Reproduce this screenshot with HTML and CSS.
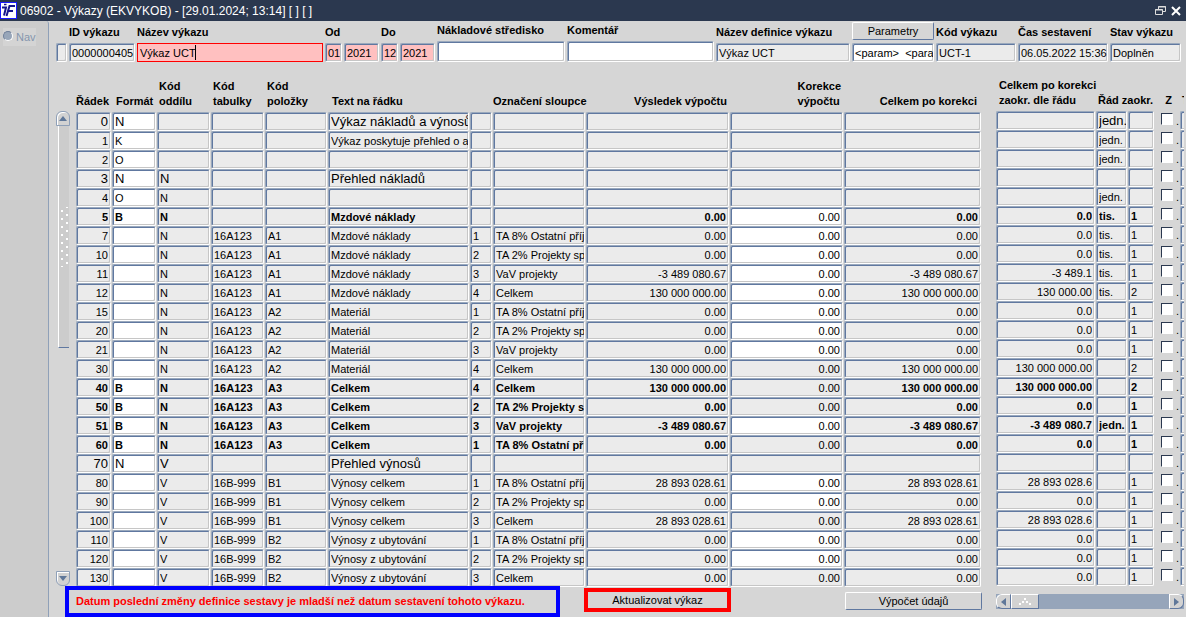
FILE: index.html
```
<!DOCTYPE html>
<html lang="cs">
<head>
    <meta charset="UTF-8">
    <meta name="viewport" content="width=device-width, initial-scale=1.0">
    <title>06902 - Výkazy (EKVYKOB)</title>
    <link rel="stylesheet" href="styles.css">
</head>
<body>
    <header class="titlebar">
        <svg class="logo" width="17" height="17" viewBox="0 0 17 17" aria-hidden="true">
            <rect x="0.5" y="0.5" width="16" height="16" fill="#fff" stroke="#1a1aff"/>
            <g fill="none" stroke="#14148c" stroke-width="2">
                <path d="M2 5.5h4L4 13.5"/>
                <path d="M15 4H9.5L6.5 14M8.5 9h4.500"/>
            </g>
            <path d="M4 2.500h2.500" stroke="#14148c" stroke-width="1.500"/>
        </svg>
        <h1>06902 - Výkazy (EKVYKOB) - [29.01.2024; 13:14] [ ] [ ]</h1>
        <button class="win-btn" aria-label="Obnovit">
            <svg width="11" height="10" viewBox="0 0 11 10" fill="none" stroke="#ddd">
                <path d="M3.500 3V0.500h7v5H8"/><path d="M3 1h8"/>
                <path d="M0.500 3.500h7v5h-7z"/><path d="M0 4h8"/>
            </svg>
        </button>
        <button class="win-btn" aria-label="Zavřít">
            <svg width="10" height="10" viewBox="0 0 10 10" stroke="#fff" stroke-width="2">
                <path d="M1 1l8 8M9 1L1 9"/>
            </svg>
        </button>
    </header>

    <div class="layout">
        <aside class="sidebar">
            <label class="nav"><input type="radio" name="nav" disabled>Nav</label>
        </aside>

        <main class="content">
            <form class="head-form">
                <div class="field w-mark"><input type="text" class="cell" aria-label="Značka" readonly></div>
                <div class="field w-id"><label for="idVykazu">ID výkazu</label><input type="text" id="idVykazu" class="cell" value="0000000405" readonly></div>
                <div class="field w-name"><label for="nazev">Název výkazu</label>
                    <input type="text" id="nazev" class="cell required active" value="Výkaz UCT">
                    <span class="caret"></span>
                </div>
                <div class="field w-month"><label for="odMesic">Od</label><input type="text" id="odMesic" class="cell required" value="01"></div>
                <div class="field w-year"><input type="text" class="cell required" aria-label="Od rok" value="2021"></div>
                <div class="field w-month"><label for="doMesic">Do</label><input type="text" id="doMesic" class="cell required" value="12"></div>
                <div class="field w-year"><input type="text" class="cell required" aria-label="Do rok" value="2021"></div>
                <div class="field w-stred tall"><label for="stredisko">Nákladové středisko</label><input type="text" id="stredisko" class="cell edit"></div>
                <div class="field w-kom tall"><label for="komentar">Komentář</label><input type="text" id="komentar" class="cell edit"></div>
                <div class="field w-def"><label for="definice">Název definice výkazu</label><input type="text" id="definice" class="cell" value="Výkaz UCT" readonly></div>
                <div class="field w-par">
                    <button type="button" class="btn">Parametry</button>
                    <input type="text" class="cell edit" aria-label="Parametry" value="&lt;param&gt;&nbsp; &lt;param&gt;">
                </div>
                <div class="field w-kod"><label for="kod">Kód výkazu</label><input type="text" id="kod" class="cell" value="UCT-1" readonly></div>
                <div class="field w-cas"><label for="cas">Čas sestavení</label><input type="text" id="cas" class="cell" value="06.05.2022 15:36" readonly></div>
                <div class="field w-stav"><label for="stav">Stav výkazu</label><input type="text" id="stav" class="cell" value="Doplněn" readonly></div>
            </form>

            <div class="grid-area">
                <div class="vscroll">
                    <button class="vbtn up" aria-label="Nahoru">
                        <svg width="8" height="5" viewBox="0 0 8 5" fill="#5f7799"><path d="M4 0l4 5H0z"/></svg>
                    </button>
                    <div class="vthumb"><span class="grip"></span></div>
                    <button class="vbtn down" aria-label="Dolů">
                        <svg width="8" height="5" viewBox="0 0 8 5" fill="#5f7799"><path d="M0 0h8L4 5z"/></svg>
                    </button>
                </div>

                <table class="grid main-grid">
                    <colgroup>
                        <col class="c-radek"><col class="c-format"><col class="c-kod"><col class="c-kod"><col class="c-polozka">
                        <col><col class="c-cislo"><col class="c-oznaceni"><col class="c-vysledek"><col class="c-korekce"><col class="c-celkem">
                    </colgroup>
                    <thead>
                        <tr>
                            <th>Řádek</th><th class="ind">Formát</th><th>Kód<br>oddílu</th><th>Kód<br>tabulky</th><th>Kód<br>položky</th>
                            <th class="ind">Text na řádku</th><th></th><th class="over">Označení sloupce</th><th class="num">Výsledek výpočtu</th>
                            <th class="num"><span class="two-line">Korekce<br>výpočtu</span></th><th class="num last">Celkem po korekci</th>
                        </tr>
                    </thead>
                    <tbody id="mainRows"></tbody>
                </table>

                <div class="side-wrap">
                    <table class="grid side-grid">
                        <colgroup>
                            <col class="c-zaokr"><col class="c-rad"><col class="c-pocet"><col class="c-check"><col class="c-typ">
                        </colgroup>
                        <thead>
                            <tr><th>Celkem po korekci<br>zaokr. dle řádu</th><th colspan="2">Řád zaokr.</th><th class="mid">Z</th><th>T</th></tr>
                        </thead>
                        <tbody id="sideRows"></tbody>
                    </table>
                </div>
            </div>

            <footer class="bottom">
                <p class="notice">Datum poslední změny definice sestavy je mladší než datum sestavení tohoto výkazu.</p>
                <div class="marked"><button type="button" class="btn">Aktualizovat výkaz</button></div>
                <button type="button" class="btn calc">Výpočet údajů</button>
                <div class="hscroll">
                    <button class="hbtn left" aria-label="Vlevo"><svg width="5" height="8" viewBox="0 0 5 8" fill="#5f7799"><path d="M5 0v8L0 4z"/></svg></button>
                    <div class="hthumb">
                        <svg width="12" height="8" viewBox="0 0 12 8" fill="#fff"><path d="M0 5h2v2H0zM3 3h2v2H3zM5 0h2v2H5zM7 3h2v2H7zM10 5h2v2h-2z"/></svg>
                    </div>
                    <button class="hbtn right" aria-label="Vpravo"><svg width="5" height="8" viewBox="0 0 5 8" fill="#5f7799"><path d="M0 0v8l5-4z"/></svg></button>
                </div>
            </footer>
        </main>
    </div>
    <script src="script.js"></script>
</body>
</html>
```

FILE: styles.css
```
* {
    box-sizing: border-box;
}
body {
    margin: 0;
    background-color: #d6d6d6;
    color: #000;
    font-family: "Liberation Sans", Arial, sans-serif;
    font-size: 11px;
    min-height: 100vh;
    display: flex;
    flex-direction: column;
    overflow: hidden;
}
input, button {
    font-family: inherit;
    font-size: inherit;
    color: inherit;
}

/* title bar */
.titlebar {
    display: flex;
    align-items: center;
    height: 21px;
    background-color: #2b384f;
    color: #fff;
}
.titlebar h1 {
    flex: 1;
    margin: 0 0 0 3px;
    font-size: 12px;
    font-weight: normal;
    white-space: pre;
}
.win-btn {
    display: flex;
    padding: 0;
    margin-right: 5px;
    border: none;
    background: none;
}

/* layout */
.layout {
    display: flex;
    flex: 1;
}
.sidebar {
    width: 49px;
    padding: 7px 0 0 3px;
    background-color: #ccc;
    border-right: 1px solid #8fa0b8;
    border-top-right-radius: 3px;
}
.nav {
    display: flex;
    align-items: center;
    gap: 3px;
    width: 33px;
    height: 18px;
    background-color: #d4d4d4;
    color: #8496ae;
}
.nav input {
    flex: none;
    appearance: none;
    width: 10px;
    height: 10px;
    margin: 0 0 2px;
    border-radius: 50%;
    border: 1px solid #6e7f99;
    border-right-color: #fff;
    border-bottom-color: #fff;
    background-color: #98a6b9;
}
.content {
    flex: 1;
    min-width: 0;
}

/* sunken text box used everywhere */
.cell {
    display: block;
    width: 100%;
    height: 19px;
    padding: 0 0 0 2px;
    border: 1px solid;
    border-color: #9aa9bd #fff #fff #9aa9bd;
    border-radius: 2px;
    outline: none;
    background-color: #ebebeb;
    box-shadow: inset 1px 1px 0 #6078a0, inset -1px -1px 0 #c6c6c6;
}
.cell.edit {
    background-color: #fff;
}
.cell.required {
    background-color: #ffc0c0;
}
.cell.active {
    border: 1px solid #f00;
    border-radius: 0;
    box-shadow: none;
    caret-color: transparent;
}
.caret {
    position: absolute;
    left: 58px;
    bottom: 2px;
    width: 1px;
    height: 15px;
    background-color: #000;
}
.btn {
    height: 18px;
    padding: 0;
    border: 1px solid;
    border-color: #fff #6078a0 #6078a0 #fff;
    border-radius: 2px;
    background-color: #d6d6d6;
}

/* header form */
.head-form {
    display: flex;
    align-items: flex-end;
    gap: 2px;
    height: 41px;
    padding: 0 5px 0 7px;
}
.field label {
    display: block;
    height: 18px;
    line-height: 14px;
    font-weight: bold;
    white-space: nowrap;
}
.tall .cell {
    height: 21px;
}
.field .btn {
    display: block;
    width: 100%;
    margin-bottom: 3px;
}
.w-mark { width: 11px; }
.w-id { width: 66px; }
.w-name { flex: 1; position: relative; }
.w-month { width: 17px; }
.w-year { width: 35px; }
.w-stred { width: 128px; }
.w-kom { width: 147px; }
.w-def { width: 134px; }
.w-par { width: 82px; }
.w-kod { width: 80px; }
.w-cas { width: 90px; }
.w-stav { width: 71px; }

/* scroll bar beside the grid */
.grid-area {
    display: flex;
    padding-left: 7px;
}
.vscroll {
    display: flex;
    flex-direction: column;
    width: 14px;
    margin: 49px 6px 1px 0;
}
.vbtn {
    display: flex;
    align-items: center;
    justify-content: center;
    height: 15px;
    padding: 0;
    border: 1px solid #8fa0b8;
    background-color: #d2d2d2;
    box-shadow: inset 1px 1px 0 #fff;
}
.vbtn.up {
    border-radius: 6px 6px 0 0;
}
.vbtn.down {
    margin-top: auto;
    border-radius: 0 0 6px 6px;
}
.vthumb {
    display: flex;
    align-items: center;
    justify-content: center;
    height: 222px;
    margin: 0 1px 0 2px;
    border-left: 1px solid #fff;
    border-bottom: 1px solid #6078a0;
    background-color: #ccc;
}
.grip {
    width: 8px;
    height: 60px;
    background-image: radial-gradient(circle, #fff 1px, transparent 1px), radial-gradient(circle, #fff 1px, transparent 1px);
    background-size: 10px 8px;
    background-position: -3px 0, 2px 4px;
}

/* grids */
.grid {
    border-collapse: collapse;
    table-layout: fixed;
}
.main-grid {
    flex: 1;
    width: 0;
}
.grid th {
    height: 50px;
    padding: 0 0 3px 2px;
    line-height: 15px;
    text-align: left;
    vertical-align: bottom;
    white-space: nowrap;
}
.side-grid th {
    height: 49px;
}
.grid th:first-child {
    padding-left: 0;
}
.grid .ind {
    padding-left: 4px;
}
.grid .over {
    padding-left: 0;
}
.grid th.num {
    padding-right: 3px;
    text-align: right;
}
.grid th.last {
    padding-right: 5px;
}
.grid th.mid {
    text-align: center;
}
.side-grid th:first-child {
    padding-left: 3px;
}
.two-line {
    display: inline-block;
    text-align: left;
}
.grid td {
    height: 19px;
    padding: 0 1px 0 0;
}
.num .cell {
    padding-right: 2px;
    text-align: right;
}
.bold .cell {
    font-weight: bold;
}
.bold .plain .cell {
    font-weight: normal;
}
.large .cell {
    font-size: 13px;
}
.c-radek { width: 36px; }
.c-format { width: 45px; }
.c-kod { width: 54px; }
.c-polozka { width: 63px; }
.c-cislo { width: 23px; }
.c-oznaceni { width: 93px; }
.c-vysledek { width: 144px; }
.c-korekce { width: 114px; }
.c-celkem { width: 138px; }
.side-wrap {
    width: 188px;
    margin: 0 2px 0 14px;
    overflow: hidden;
}
.side-grid {
    width: 210px;
}
.c-zaokr { width: 100px; }
.c-rad { width: 32px; }
.c-pocet { width: 27px; }
.c-check { width: 25px; }
.c-typ { width: 26px; }
.grid td.check {
    padding: 0 0 0 6px;
}
.check label {
    display: flex;
    align-items: center;
    gap: 3px;
    height: 19px;
}
.check input {
    appearance: none;
    width: 12px;
    height: 12px;
    margin: 0 0 3px;
    border: 1px solid;
    border-color: #2b384f #fff #fff #2b384f;
    background-color: #fff;
}

/* bottom line */
.bottom {
    display: flex;
    align-items: flex-start;
    padding: 0 2px 0 16px;
}
.notice {
    width: 495px;
    height: 31px;
    margin: -1px 24px 0 0;
    padding-left: 7px;
    border: 4px solid #00f;
    background-color: #d6d6d6;
    color: #f00;
    font-weight: bold;
    line-height: 22px;
    white-space: nowrap;
}
.marked {
    width: 147px;
    height: 24px;
    margin-top: 1px;
    border: 4px solid #f00;
}
.marked .btn {
    display: block;
    width: 100%;
    height: 16px;
    border-color: #d6d6d6;
}
.calc {
    width: 137px;
    margin: 5px 14px 0 auto;
}
.hscroll {
    display: flex;
    width: 188px;
    height: 15px;
    margin-top: 7px;
    background-color: #96a5ba;
}
.hbtn, .hthumb {
    display: flex;
    align-items: center;
    justify-content: center;
    width: 15px;
    padding: 0;
    border: 1px solid;
    border-color: #fff #6078a0 #6078a0 #fff;
    background-color: #d2d2d2;
}
.hthumb {
    width: 28px;
}
.left {
    border-radius: 6px 0 0 6px;
}
.right {
    margin-left: auto;
    border-radius: 0 6px 6px 0;
}
```

FILE: script.js
```
// řádek, formát, oddíl, tabulka, položka, text, číslo, označení, výsledek, korekce, celkem, zaokr., řád, počet
const rows = [
    ['0', 'N', '', '', '', 'Výkaz nákladů a výnosů', '', '', '', '', '', '', 'jedn.', ''],
    ['1', 'K', '', '', '', 'Výkaz poskytuje přehled o a', '', '', '', '', '', '', 'jedn.', ''],
    ['2', 'O', '', '', '', '', '', '', '', '', '', '', 'jedn.', ''],
    ['3', 'N', 'N', '', '', 'Přehled nákladů', '', '', '', '', '', '', '', ''],
    ['4', 'O', 'N', '', '', '', '', '', '', '', '', '', 'jedn.', ''],
    ['5', 'B', 'N', '', '', 'Mzdové náklady', '', '', '0.00', '0.00', '0.00', '0.0', 'tis.', '1'],
    ['7', '', 'N', '16A123', 'A1', 'Mzdové náklady', '1', 'TA 8% Ostatní příjmy', '0.00', '0.00', '0.00', '0.0', 'tis.', '1'],
    ['10', '', 'N', '16A123', 'A1', 'Mzdové náklady', '2', 'TA 2% Projekty spol', '0.00', '0.00', '0.00', '0.0', 'tis.', '1'],
    ['11', '', 'N', '16A123', 'A1', 'Mzdové náklady', '3', 'VaV projekty', '-3 489 080.67', '0.00', '-3 489 080.67', '-3 489.1', 'tis.', '1'],
    ['12', '', 'N', '16A123', 'A1', 'Mzdové náklady', '4', 'Celkem', '130 000 000.00', '0.00', '130 000 000.00', '130 000.00', 'tis.', '2'],
    ['15', '', 'N', '16A123', 'A2', 'Materiál', '1', 'TA 8% Ostatní příjmy', '0.00', '0.00', '0.00', '0.0', '', '1'],
    ['20', '', 'N', '16A123', 'A2', 'Materiál', '2', 'TA 2% Projekty spol', '0.00', '0.00', '0.00', '0.0', '', '1'],
    ['21', '', 'N', '16A123', 'A2', 'Materiál', '3', 'VaV projekty', '0.00', '0.00', '0.00', '0.0', '', '1'],
    ['30', '', 'N', '16A123', 'A2', 'Materiál', '4', 'Celkem', '130 000 000.00', '0.00', '130 000 000.00', '130 000 000.00', '', '2'],
    ['40', 'B', 'N', '16A123', 'A3', 'Celkem', '4', 'Celkem', '130 000 000.00', '0.00', '130 000 000.00', '130 000 000.00', '', '2'],
    ['50', 'B', 'N', '16A123', 'A3', 'Celkem', '2', 'TA 2% Projekty spol', '0.00', '0.00', '0.00', '0.0', '', '1'],
    ['51', 'B', 'N', '16A123', 'A3', 'Celkem', '3', 'VaV projekty', '-3 489 080.67', '0.00', '-3 489 080.67', '-3 489 080.7', 'jedn.', '1'],
    ['60', 'B', 'N', '16A123', 'A3', 'Celkem', '1', 'TA 8% Ostatní příjmy', '0.00', '0.00', '0.00', '0.0', '', '1'],
    ['70', 'N', 'V', '', '', 'Přehled výnosů', '', '', '', '', '', '', '', ''],
    ['80', '', 'V', '16B-999', 'B1', 'Výnosy celkem', '1', 'TA 8% Ostatní příjmy', '28 893 028.61', '0.00', '28 893 028.61', '28 893 028.6', '', '1'],
    ['90', '', 'V', '16B-999', 'B1', 'Výnosy celkem', '2', 'TA 2% Projekty spol', '0.00', '0.00', '0.00', '0.0', '', '1'],
    ['100', '', 'V', '16B-999', 'B1', 'Výnosy celkem', '3', 'Celkem', '28 893 028.61', '0.00', '28 893 028.61', '28 893 028.6', '', '1'],
    ['110', '', 'V', '16B-999', 'B2', 'Výnosy z ubytování', '1', 'TA 8% Ostatní příjmy', '0.00', '0.00', '0.00', '0.0', '', '1'],
    ['120', '', 'V', '16B-999', 'B2', 'Výnosy z ubytování', '2', 'TA 2% Projekty spol', '0.00', '0.00', '0.00', '0.0', '', '1'],
    ['130', '', 'V', '16B-999', 'B2', 'Výnosy z ubytování', '3', 'Celkem', '0.00', '0.00', '0.00', '0.0', '', '1']
];

const names = ['Řádek', 'Formát', 'Kód oddílu', 'Kód tabulky', 'Kód položky', 'Text na řádku', 'Číslo sloupce', 'Označení sloupce',
    'Výsledek výpočtu', 'Korekce výpočtu', 'Celkem po korekci', 'Celkem po korekci zaokr.', 'Řád', 'Zaokrouhlení'];
const numeric = [0, 8, 9, 10, 11];

// řádky, kde se dá zapsat korekce
const editable = ['5', '7', '10', '11', '12', '15', '20', '21', '51', '80', '90', '110', '120'];

function cell(row, i) {
    const edit = i === 1 || (i === 9 && editable.includes(row[0]));
    const cls = (numeric.includes(i) ? 'num' : '') + (i === 9 ? ' plain' : '');
    return `<td class="${cls}"><input type="text" class="cell${edit ? ' edit' : ''}" aria-label="${names[i]} ${row[0]}" value="${row[i]}"${edit ? '' : ' readonly'}></td>`;
}

let main = '';
let side = '';
rows.forEach(row => {
    const cls = row[1] === 'N' ? 'large' : row[1] === 'B' ? 'bold' : '';
    const cells = row.map((value, i) => cell(row, i));
    main += `<tr class="${cls}">${cells.slice(0, 11).join('')}</tr>`;
    side += `<tr class="${cls}">${cells.slice(11).join('')}
        <td class="check"><label><input type="checkbox" aria-label="Z ${row[0]}">.</label></td>
        <td><input type="text" class="cell" aria-label="Typ ${row[0]}" readonly></td></tr>`;
});
document.getElementById('mainRows').innerHTML = main;
document.getElementById('sideRows').innerHTML = side;
```
